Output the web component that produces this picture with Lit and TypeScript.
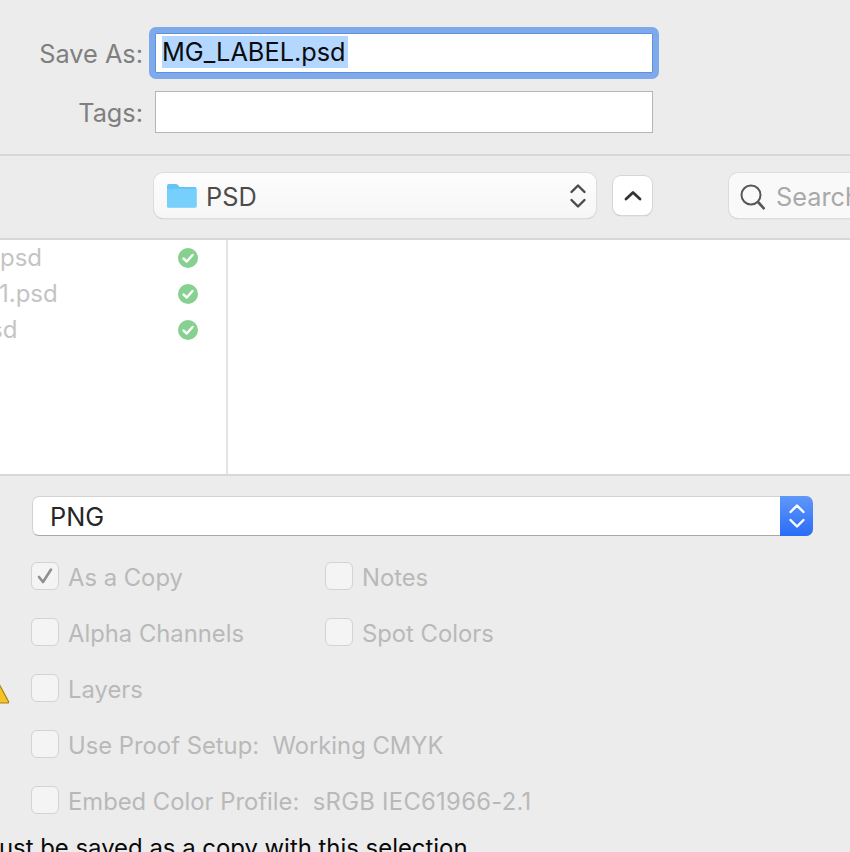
import { LitElement, html, css, svg } from "lit";
import { customElement } from "lit/decorators.js";

const files = [
  { name: "psd", shift: 0 },
  { name: "1.psd", shift: -1 },
  { name: "sd", shift: -10 },
];

const options = [
  { label: "As a Copy", checked: true },
  { label: "Notes" },
  { label: "Alpha Channels" },
  { label: "Spot Colors" },
  { label: "Layers" },
  { label: "" },
  { label: "Use Proof Setup:  Working CMYK", wide: true },
  { label: "Embed Color Profile:  ", value: "sRGB IEC61966-2.1", wide: true },
];

const stepper = (color: string, width: number) => svg`
  <svg class="stepper" width="18" height="26" viewBox="0 0 18 26" fill="none" stroke=${color} stroke-width=${width} stroke-linecap="round" stroke-linejoin="round">
    <path d="M2.5 9 L9 2.5 L15.5 9" />
    <path d="M2.5 17 L9 23.5 L15.5 17" />
  </svg>`;

@customElement("app-root")
export class AppRoot extends LitElement {
  static styles = css`
    :host {
      display: block;
      width: 850px;
      height: 852px;
      overflow: hidden;
      background: #ececec;
      font-family: Inter, "Open Sans", sans-serif;
      font-size: 25.3px;
      color: #7f7f7f;
    }
    .form {
      height: 154px;
      padding-top: 27px;
      box-sizing: border-box;
    }
    .form-row {
      display: flex;
      align-items: center;
    }
    .form-row + .form-row {
      margin-top: 12px;
    }
    .label {
      width: 143px;
      text-align: right;
      flex: none;
    }
    .ring {
      margin-left: 6px;
      width: 510px;
      height: 52px;
      box-sizing: border-box;
      border: 6px solid #7eaaec;
      border-radius: 7px;
      background: #fff;
      box-shadow: inset 0 0 0 1px #5f90dc;
      padding: 3px 0 0 7px;
    }
    .selected {
      display: inline-block;
      height: 32px;
      line-height: 32px;
      padding-right: 2px;
      background: #b3d7ff;
      color: #0b0b0b;
      white-space: nowrap;
    }
    .tags {
      margin-left: 12px;
      width: 498px;
      height: 42px;
      box-sizing: border-box;
      border: 1px solid #b4b4b4;
      background: #fff;
    }
    .line {
      height: 2px;
      background: #d7d7d7;
    }
    .path-row {
      height: 82px;
      box-sizing: border-box;
      padding: 17px 0 0 154px;
      display: flex;
      align-items: flex-start;
    }
    .popup {
      width: 442px;
      height: 45px;
      flex: none;
      box-sizing: border-box;
      display: flex;
      align-items: center;
      padding: 0 9px 0 12px;
      border-radius: 9px;
      background: linear-gradient(#fdfdfd, #f6f6f6);
      box-shadow: 0 0 0 1px #dcdcdc, 0 1px 1px #b5b5b5;
      color: #4c4c4c;
    }
    .popup .name {
      margin: 2px 0 0 9px;
      flex: 1;
    }
    .up {
      margin: 3px 0 0 17px;
      width: 39px;
      height: 39px;
      flex: none;
      border-radius: 8px;
      background: #fff;
      box-shadow: 0 0 0 1px #d6d6d6, 0 1px 1px #a8a8a8;
      display: flex;
      align-items: center;
      justify-content: center;
    }
    .search {
      margin-left: 77px;
      width: 160px;
      height: 45px;
      flex: none;
      box-sizing: border-box;
      display: flex;
      align-items: center;
      padding-left: 8px;
      gap: 11px;
      border-radius: 9px;
      background: #f9f9f9;
      box-shadow: 0 0 0 1px #dcdcdc, 0 1px 1px #b5b5b5;
      color: #a9a9a9;
      white-space: nowrap;
    }
    .search span {
      margin-top: 2px;
    }
    .browser {
      height: 234px;
      background: #fff;
      display: flex;
    }
    .files {
      width: 226px;
      border-right: 2px solid #e4e4e4;
    }
    .file {
      height: 36px;
      display: flex;
      align-items: center;
      justify-content: space-between;
      padding-right: 28px;
      font-size: 24px;
      line-height: 34px;
      color: #c4c4c4;
    }
    .save-options {
      position: relative;
      padding: 20px 0 0 31px;
    }
    .format {
      width: 781px;
      margin-left: 1px;
      height: 40px;
      box-sizing: border-box;
      display: flex;
      align-items: center;
      border: 1px solid #d2d2d2;
      border-bottom-color: #a8a8a8;
      border-right: none;
      border-radius: 7px;
      background: #fff;
      color: #262626;
    }
    .format .name {
      flex: 1;
      padding: 1px 0 0 17px;
    }
    .format .arrows {
      width: 33px;
      height: 40px;
      margin: -1px 0;
      border-radius: 0 7px 7px 0;
      display: flex;
      align-items: center;
      justify-content: center;
      background: linear-gradient(#5f98fb, #2a6cf6);
    }
    .grid {
      margin-top: 26px;
      display: grid;
      grid-template-columns: 294px 1fr;
      grid-auto-rows: 28px;
      row-gap: 28px;
    }
    .option {
      display: flex;
      align-items: center;
      gap: 9px;
      color: #b9b9b9;
      font-size: 23.8px;
      line-height: 30px;
      white-space: pre;
    }
    .option > span {
      margin-top: 4px;
    }
    .option.wide {
      grid-column: 1 / 3;
    }
    .option .value {
      letter-spacing: 0.3px;
    }
    .box {
      width: 28px;
      height: 28px;
      box-sizing: border-box;
      flex: none;
      border: 1px solid #d3d3d3;
      border-radius: 6px;
      background: #f4f4f4;
      display: flex;
      align-items: center;
      justify-content: center;
    }
    .warn {
      position: absolute;
      left: -14px;
      top: 204px;
    }
    .message {
      margin: 18px 0 0 -22px;
      line-height: 32px;
      color: #0a0a0a;
      font-size: 23.9px;
      white-space: nowrap;
    }
  `;

  render() {
    return html`
      <div class="form">
        <div class="form-row">
          <div class="label">Save As:</div>
          <div class="ring"><span class="selected">MG_LABEL.psd</span></div>
        </div>
        <div class="form-row">
          <div class="label">Tags:</div>
          <div class="tags"></div>
        </div>
      </div>
      <div class="line"></div>
      <div class="path-row">
        <div class="popup">
          <svg width="31" height="25" viewBox="0 0 31 25">
            <path d="M1 3 Q1 1 3 1 H10 Q11.5 1 12.5 2.5 L13.5 4 H29 Q30.500 4 30.500 6 V23 Q30.500 24.500 29 24.500 H2.500 Q1 24.500 1 23 Z" fill="#63c5f5" />
            <path d="M1 6 H30.500 V23 Q30.500 24.500 29 24.500 H2.500 Q1 24.500 1 23 Z" fill="#76d0fb" />
          </svg>
          <span class="name">PSD</span>
          ${stepper("#4a4a4a", 2.4)}
        </div>
        <div class="up">
          <svg width="18" height="11" viewBox="0 0 18 11" fill="none" stroke="#333" stroke-width="2.800" stroke-linecap="round" stroke-linejoin="round">
            <path d="M2 9 L9 2.500 L16 9" />
          </svg>
        </div>
        <div class="search">
          <svg width="28" height="28" viewBox="0 0 28 28" fill="none" stroke="#565656" stroke-width="2">
            <circle cx="14" cy="13" r="9.500" />
            <path d="M21 20 L27.500 27" stroke-width="2.600" />
          </svg>
          <span>Search</span>
        </div>
      </div>
      <div class="line"></div>
      <div class="browser">
        <div class="files">
          ${files.map(
            (f) => html`
              <div class="file">
                <span style="margin-left: ${f.shift}px">${f.name}</span>
                <svg width="20" height="20" viewBox="0 0 20 20">
                  <circle cx="10" cy="10" r="10" fill="#86d190" />
                  <path d="M5.500 10.500 L8.800 13.500 L14.500 7" fill="none" stroke="#fff" stroke-width="2.400" stroke-linecap="round" stroke-linejoin="round" />
                </svg>
              </div>
            `
          )}
        </div>
      </div>
      <div class="line"></div>
      <div class="save-options">
        <div class="format">
          <span class="name">PNG</span>
          <div class="arrows">${stepper("#fff", 2.4)}</div>
        </div>
        <div class="grid">
          ${options.map((o) =>
            o.label === ""
              ? html`<div></div>`
              : html`
                  <div class="option ${o.wide ? "wide" : ""}">
                    <div class="box">
                      ${o.checked
                        ? html`<svg width="18" height="18" viewBox="0 0 18 18" fill="none" stroke="#8f8f8f" stroke-width="2.600" stroke-linecap="round" stroke-linejoin="round"><path d="M3 10 L7 15 L15 2.500" /></svg>`
                        : ""}
                    </div>
                    <span>${o.label}<span class="value">${o.value ?? ""}</span></span>
                  </div>
                `
          )}
        </div>
        <svg class="warn" width="24" height="24" viewBox="0 0 24 24">
          <path d="M12 2 L22.500 21.500 Q23 23 21.500 23 H2.500 Q1 23 1.500 21.500 Z" fill="#f7c325" stroke="#a5820f" stroke-width="1.200" />
        </svg>
      </div>
      <div class="message">must be saved as a copy with this selection.</div>
    `;
  }
}
